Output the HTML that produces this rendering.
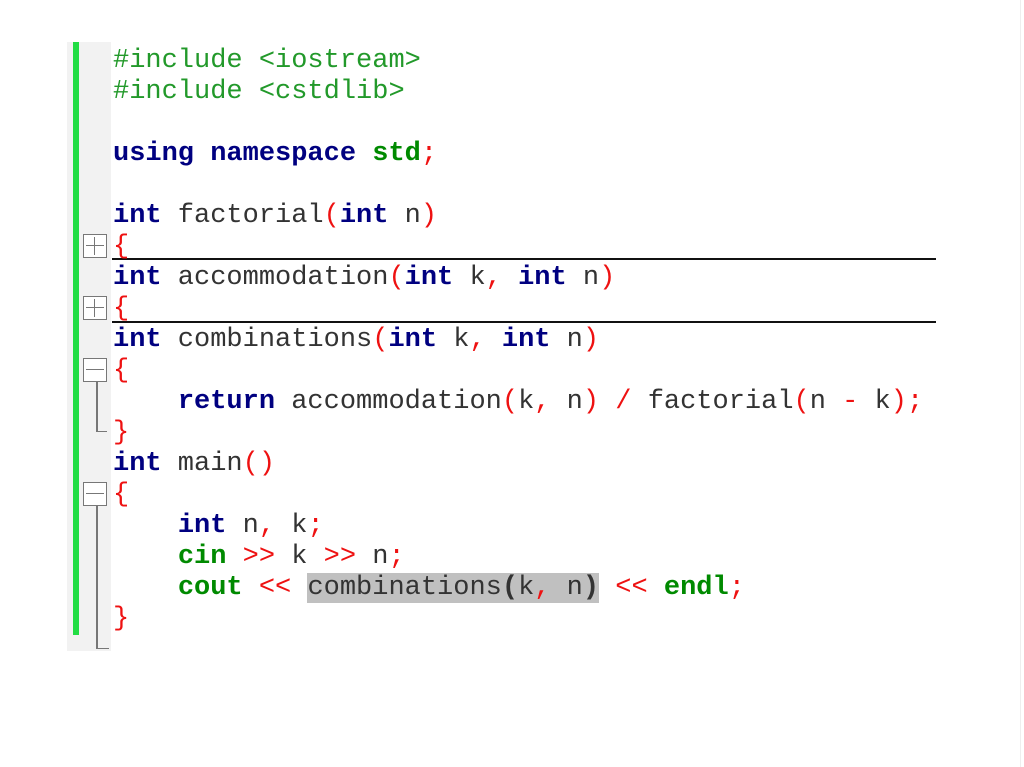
<!DOCTYPE html>
<html><head><style>
body{margin:0;width:1024px;height:767px;background:#fff;position:relative;overflow:hidden;font-family:"Liberation Mono",monospace}
.gut{position:absolute;left:67px;top:42px;width:44px;height:609px;background:#f2f2f2}
.bar{position:absolute;left:73px;top:42px;width:6px;height:593px;background:#22dd44}
.code{position:absolute;left:113px;top:46px;font-size:27px;line-height:31px;white-space:pre;color:#333}
.k{color:#000080;font-weight:bold}.g{color:#22992a}.gb{color:#008a00;font-weight:bold}.r{color:#ee1111}
.hl{background:#c0c0c0}
.box{position:absolute;left:83px;width:22px;height:22px;border:1px solid #777;background:#fff}
.h{position:absolute;background:#777}
.ln{position:absolute;left:112px;width:824px;height:2px;background:#111}
.edge{position:absolute;right:3px;top:0;width:1px;height:767px;background:#eee}
</style></head><body>
<div class="edge"></div>
<div class="gut"></div><div class="bar"></div>
<div class="box" style="top:234px"></div><div class="h" style="left:86px;top:245px;width:18px;height:1px"></div><div class="h" style="left:94px;top:237px;width:1px;height:18px"></div>
<div class="box" style="top:296px"></div><div class="h" style="left:86px;top:307px;width:18px;height:1px"></div><div class="h" style="left:94px;top:299px;width:1px;height:18px"></div>
<div class="box" style="top:358px"></div><div class="h" style="left:86px;top:369px;width:18px;height:1px"></div>
<div class="h" style="left:96px;top:382px;width:2px;height:50px"></div><div class="h" style="left:96px;top:431px;width:11px;height:1px"></div>
<div class="box" style="top:482px"></div><div class="h" style="left:86px;top:493px;width:18px;height:1px"></div>
<div class="h" style="left:96px;top:506px;width:2px;height:143px"></div><div class="h" style="left:96px;top:648px;width:13px;height:1px"></div>
<div class="ln" style="top:258px"></div><div class="ln" style="top:321px"></div>
<div class="code"><span class="g">#include &lt;iostream&gt;</span>
<span class="g">#include &lt;cstdlib&gt;</span>

<span class="k">using namespace</span> <span class="gb">std</span><span class="r">;</span>

<span class="k">int</span> factorial<span class="r">(</span><span class="k">int</span> n<span class="r">)</span>
<span class="r">{</span>
<span class="k">int</span> accommodation<span class="r">(</span><span class="k">int</span> k<span class="r">,</span> <span class="k">int</span> n<span class="r">)</span>
<span class="r">{</span>
<span class="k">int</span> combinations<span class="r">(</span><span class="k">int</span> k<span class="r">,</span> <span class="k">int</span> n<span class="r">)</span>
<span class="r">{</span>
    <span class="k">return</span> accommodation<span class="r">(</span>k<span class="r">,</span> n<span class="r">)</span> <span class="r">/</span> factorial<span class="r">(</span>n <span class="r">-</span> k<span class="r">);</span>
<span class="r">}</span>
<span class="k">int</span> main<span class="r">()</span>
<span class="r">{</span>
    <span class="k">int</span> n<span class="r">,</span> k<span class="r">;</span>
    <span class="gb">cin</span> <span class="r">&gt;&gt;</span> k <span class="r">&gt;&gt;</span> n<span class="r">;</span>
    <span class="gb">cout</span> <span class="r">&lt;&lt;</span> <span class="hl">combinations<b>(</b>k<span class="r">,</span> n<b>)</b></span> <span class="r">&lt;&lt;</span> <span class="gb">endl</span><span class="r">;</span>
<span class="r">}</span></div>
</body></html>
